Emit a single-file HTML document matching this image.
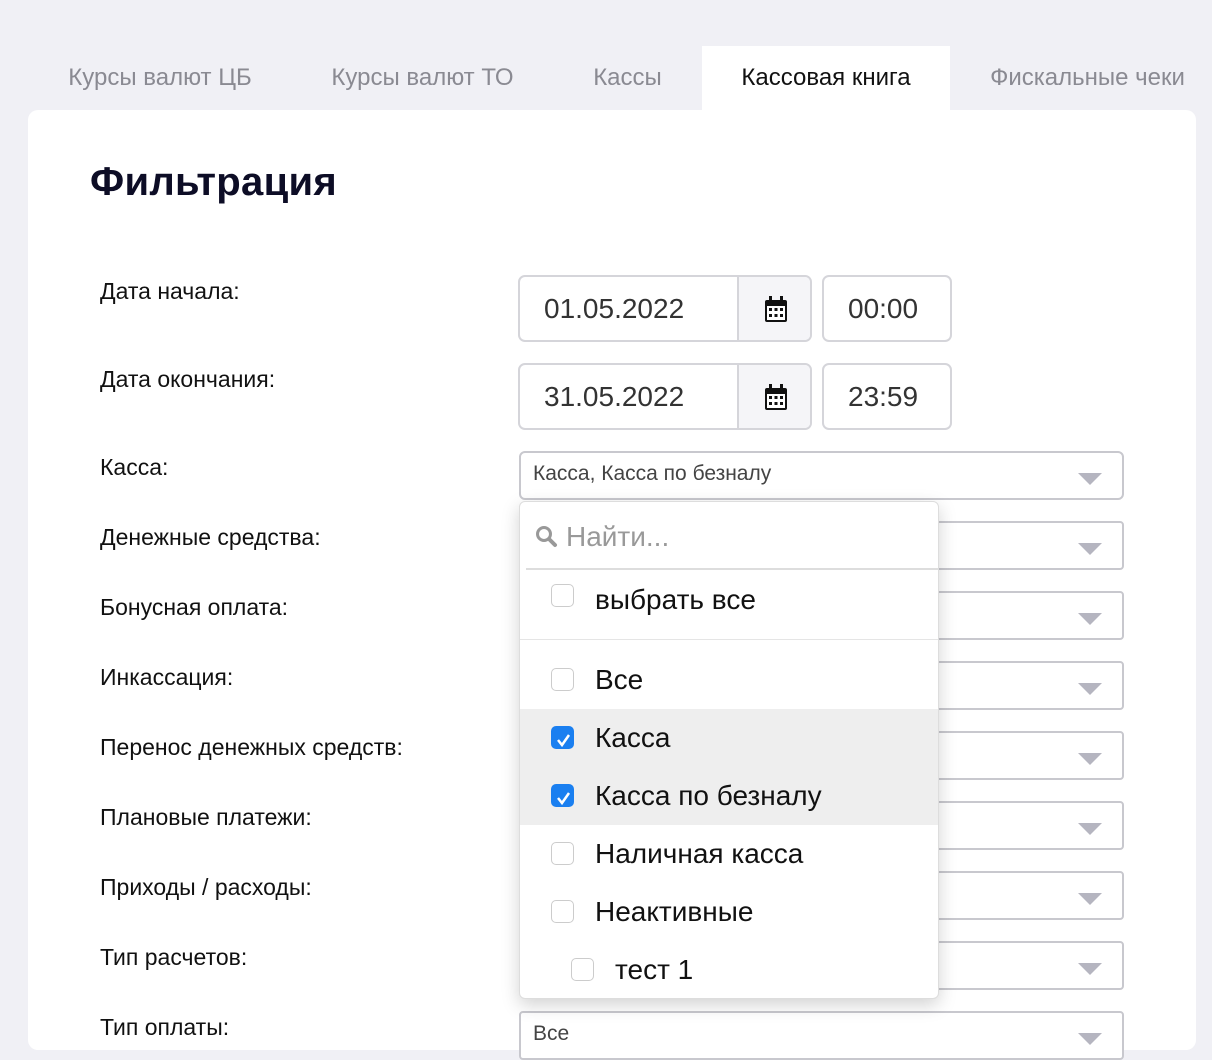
<!DOCTYPE html>
<html><head><meta charset="utf-8"><style>
*{box-sizing:border-box;margin:0;padding:0}
body{width:1212px;height:1032px;overflow:hidden;background:#f0f0f5;font-family:"Liberation Sans",sans-serif;position:relative;color:#111}
.tab{position:absolute;top:46px;height:64px;line-height:64px;font-size:24px;color:#8a8a92;text-align:center}
.tab.act{background:#fff;color:#111}
.card{position:absolute;left:28px;top:110px;width:1168px;height:940px;background:#fff;border-radius:10px}
h1{position:absolute;left:90px;top:160px;font-size:40px;font-weight:bold;color:#0d0d26;letter-spacing:0.3px}
.lbl{position:absolute;left:100px;font-size:23px;color:#111}
.box{position:absolute;border:2px solid #d5d5da;border-radius:7px;background:#fff;font-size:28px;color:#333}
.sel{position:absolute;left:519px;width:605px;height:49px;border:2px solid #c8c8ce;border-radius:4px;background:#fff;font-size:21px;color:#444;padding:9px 12px}
.arr{position:absolute;right:20px;top:20px;width:0;height:0;border-left:12px solid transparent;border-right:12px solid transparent;border-top:12px solid #b5b5c0}
.dd{position:absolute;left:519px;top:501px;width:420px;height:498px;background:#fff;border:1px solid #ddd;border-radius:6px;box-shadow:0 6px 18px rgba(0,0,0,.18)}
.it{position:absolute;left:0;width:418px;height:58px;font-size:28px;color:#111}
.cb{position:absolute;left:31px;top:17px;width:23px;height:23px;border:1px solid #ccc;border-radius:5px;background:#fff}
.cb.on{background:#1a7ff0;border-color:#1a7ff0}
.it span{position:absolute;left:75px;top:13px}
</style></head><body>
<div class="tab" style="left:40px;width:240px">Курсы валют ЦБ</div>
<div class="tab" style="left:300px;width:245px">Курсы валют ТО</div>
<div class="tab" style="left:570px;width:115px">Кассы</div>
<div class="tab act" style="left:702px;width:248px">Кассовая книга</div>
<div class="tab" style="left:970px;width:235px">Фискальные чеки</div>
<div class="card"></div>
<h1>Фильтрация</h1>
<div class="lbl" style="top:278px">Дата начала:</div>
<div class="lbl" style="top:366px">Дата окончания:</div>
<div class="lbl" style="top:454px">Касса:</div>
<div class="lbl" style="top:524px">Денежные средства:</div>
<div class="lbl" style="top:594px">Бонусная оплата:</div>
<div class="lbl" style="top:664px">Инкассация:</div>
<div class="lbl" style="top:734px">Перенос денежных средств:</div>
<div class="lbl" style="top:804px">Плановые платежи:</div>
<div class="lbl" style="top:874px">Приходы / расходы:</div>
<div class="lbl" style="top:944px">Тип расчетов:</div>
<div class="lbl" style="top:1014px">Тип оплаты:</div>

<div class="box" style="left:518px;top:275px;width:294px;height:67px;overflow:hidden"><div style="position:absolute;left:24px;top:16px">01.05.2022</div><div style="position:absolute;left:217px;top:0;width:77px;height:67px;background:#f5f5f8;border-left:2px solid #d5d5da"><svg style="position:absolute;left:25px;top:19px" width="24" height="27" viewBox="0 0 24 27"><rect x="1" y="4" width="22" height="22" rx="2" fill="#111"/><rect x="5" y="0" width="3" height="6" fill="#111"/><rect x="16" y="0" width="3" height="6" fill="#111"/><rect x="3" y="10" width="18" height="14" fill="#fff"/><g fill="#111"><rect x="5" y="12" width="3" height="3"/><rect x="10.5" y="12" width="3" height="3"/><rect x="16" y="12" width="3" height="3"/><rect x="5" y="18" width="3" height="3"/><rect x="10.5" y="18" width="3" height="3"/><rect x="16" y="18" width="3" height="3"/></g></svg></div></div>
<div class="box" style="left:822px;top:275px;width:130px;height:67px"><div style="position:absolute;left:24px;top:16px">00:00</div></div>
<div class="box" style="left:518px;top:363px;width:294px;height:67px;overflow:hidden"><div style="position:absolute;left:24px;top:16px">31.05.2022</div><div style="position:absolute;left:217px;top:0;width:77px;height:67px;background:#f5f5f8;border-left:2px solid #d5d5da"><svg style="position:absolute;left:25px;top:19px" width="24" height="27" viewBox="0 0 24 27"><rect x="1" y="4" width="22" height="22" rx="2" fill="#111"/><rect x="5" y="0" width="3" height="6" fill="#111"/><rect x="16" y="0" width="3" height="6" fill="#111"/><rect x="3" y="10" width="18" height="14" fill="#fff"/><g fill="#111"><rect x="5" y="12" width="3" height="3"/><rect x="10.5" y="12" width="3" height="3"/><rect x="16" y="12" width="3" height="3"/><rect x="5" y="18" width="3" height="3"/><rect x="10.5" y="18" width="3" height="3"/><rect x="16" y="18" width="3" height="3"/></g></svg></div></div>
<div class="box" style="left:822px;top:363px;width:130px;height:67px"><div style="position:absolute;left:24px;top:16px">23:59</div></div>

<div class="sel" style="top:451px;border-radius:6px">Касса, Касса по безналу<div class="arr"></div></div>
<div class="sel" style="top:521px"><div class="arr"></div></div>
<div class="sel" style="top:591px"><div class="arr"></div></div>
<div class="sel" style="top:661px"><div class="arr"></div></div>
<div class="sel" style="top:731px"><div class="arr"></div></div>
<div class="sel" style="top:801px"><div class="arr"></div></div>
<div class="sel" style="top:871px"><div class="arr"></div></div>
<div class="sel" style="top:941px"><div class="arr"></div></div>
<div class="sel" style="top:1011px">Все<div class="arr"></div></div>

<div class="dd">
<svg style="position:absolute;left:15px;top:23px" width="24" height="24" viewBox="0 0 24 24"><circle cx="9" cy="9" r="6.5" fill="none" stroke="#999" stroke-width="3"/><path d="M14 14l6 6" stroke="#999" stroke-width="4" stroke-linecap="round"/></svg>
<div style="position:absolute;left:46px;top:19px;font-size:28px;color:#999">Найти...</div>
<div style="position:absolute;left:6px;top:66px;width:412px;height:2px;background:#ddd"></div>
<div class="it" style="top:70px"><div class="cb" style="top:12px"></div><span style="top:12px">выбрать все</span></div>
<div style="position:absolute;left:0;top:137px;width:418px;height:1px;background:#e5e5e5"></div>
<div class="it" style="top:149px"><div class="cb"></div><span>Все</span></div>
<div class="it" style="top:207px;background:#eee"><div class="cb on"><svg width="23" height="23" viewBox="0 0 23 23"><path d="M6 11l4 5 7-10" fill="none" stroke="#fff" stroke-width="2.5"/></svg></div><span>Касса</span></div>
<div class="it" style="top:265px;background:#eee"><div class="cb on"><svg width="23" height="23" viewBox="0 0 23 23"><path d="M6 11l4 5 7-10" fill="none" stroke="#fff" stroke-width="2.5"/></svg></div><span>Касса по безналу</span></div>
<div class="it" style="top:323px"><div class="cb"></div><span>Наличная касса</span></div>
<div class="it" style="top:381px"><div class="cb"></div><span>Неактивные</span></div>
<div class="it" style="top:439px"><div class="cb" style="left:51px"></div><span style="left:95px">тест 1</span></div>
</div>
</body></html>
